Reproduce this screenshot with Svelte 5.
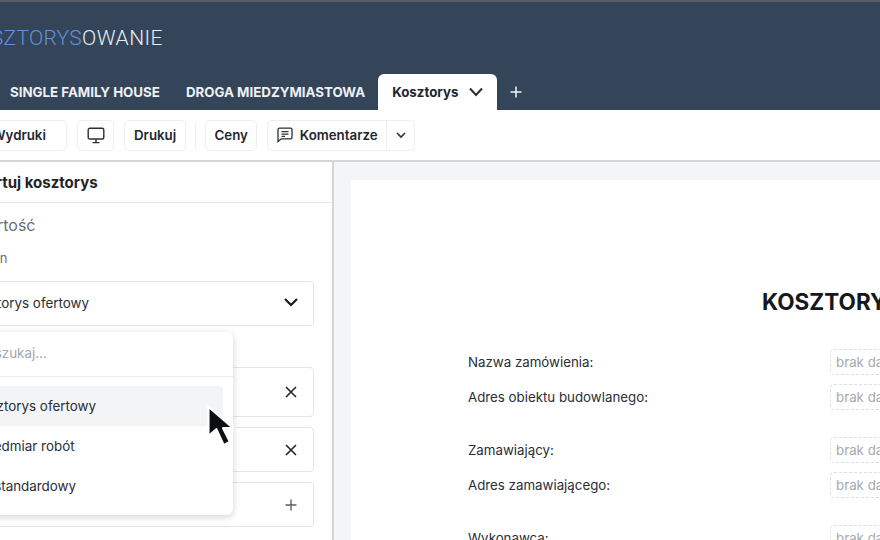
<script>
  const tabs = ['SINGLE FAMILY HOUSE', 'DROGA MIEDZYMIASTOWA'];

  const groups = [
    ['Nazwa zamówienia:', 'Adres obiektu budowlanego:'],
    ['Zamawiający:', 'Adres zamawiającego:'],
    ['Wykonawca:']
  ];

  const options = ['Kosztorys ofertowy', 'Przedmiar robót', 'Niestandardowy'];
</script>

<div class="page">
  <header class="header">
    <div class="logo"><span class="logo-blue">KOSZTORYS</span>OWANIE</div>
    <nav class="tabs">
      {#each tabs as tab}
        <span class="tab">{tab}</span>
      {/each}
      <span class="tab active">
        Kosztorys
        <svg width="16" height="10" viewBox="0 0 16 10" fill="none" stroke="#27303c" stroke-width="2">
          <path d="M2 1.5l6 6.5 6-6.5" />
        </svg>
      </span>
      <svg class="plus" width="12" height="12" viewBox="0 0 12 12" stroke="#f1f4f7" stroke-width="1.5">
        <path d="M6 .5v11M.5 6h11" />
      </svg>
    </nav>
  </header>

  <div class="toolbar">
    <button class="btn wydruki">Wydruki</button>
    <button class="btn icon-btn" aria-label="Podgląd">
      <svg width="18" height="17" viewBox="0 0 18 17" fill="none" stroke="#2b2f36" stroke-width="1.4">
        <rect x="1.2" y="1.2" width="15.6" height="10.8" rx="1.6" />
        <path d="M9 12v3.5M5.5 15.6h7" />
      </svg>
    </button>
    <button class="btn">Drukuj</button>
    <span class="sep"></span>
    <button class="btn ceny">Ceny</button>
    <div class="split">
      <button class="btn komentarze">
        <svg width="16" height="16" viewBox="0 0 16 16" fill="none" stroke="#2b2f36" stroke-width="1.3">
          <path d="M1 14.5V2.6A1.4 1.4 0 0 1 2.4 1.2h11.2A1.4 1.4 0 0 1 15 2.6v7.8a1.4 1.4 0 0 1-1.4 1.4H4.2z" />
          <path d="M4.5 4.6h7M4.5 7.2h7M4.5 9.4h3.6" />
        </svg>
        Komentarze
      </button>
      <button class="btn caret" aria-label="Więcej">
        <svg width="10" height="7" viewBox="0 0 10 7" fill="none" stroke="#2b2f36" stroke-width="1.6">
          <path d="M1 1l4 4 4-4" />
        </svg>
      </button>
    </div>
  </div>

  <div class="body">
    <aside class="sidebar">
      <div class="side-title">Eksportuj kosztorys</div>
      <div class="side-content">
        <div class="value-label">Wartość</div>
        <div class="small-label">Szablon</div>
        <div class="select">
          <span>Kosztorys ofertowy</span>
          <svg width="14" height="9" viewBox="0 0 14 9" fill="none" stroke="#16191e" stroke-width="2.2">
            <path d="M1 1l6 6 6-6" />
          </svg>
        </div>
        <div class="fields">
          <div class="field tall">
            <svg width="12" height="12" viewBox="0 0 12 12" stroke="#22262c" stroke-width="1.6">
              <path d="M1 1l10 10M11 1L1 11" />
            </svg>
          </div>
          <div class="field">
            <svg width="12" height="12" viewBox="0 0 12 12" stroke="#22262c" stroke-width="1.6">
              <path d="M1 1l10 10M11 1L1 11" />
            </svg>
          </div>
          <div class="field">
            <svg width="12" height="12" viewBox="0 0 12 12" stroke="#5b6068" stroke-width="1.4">
              <path d="M6 .5v11M.5 6h11" />
            </svg>
          </div>
        </div>
      </div>

      <div class="dropdown">
        <div class="search">Wyszukaj...</div>
        <ul class="options">
          {#each options as option, i}
            <li class:highlight={i === 0}>{option}</li>
          {/each}
        </ul>
      </div>
    </aside>

    <main class="main">
      <div class="sheet">
        <h1>KOSZTORYS OFERTOWY</h1>
        {#each groups as group}
          <div class="group">
            {#each group as label}
              <div class="row">
                <span class="row-label">{label}</span>
                <span class="empty">brak danych</span>
              </div>
            {/each}
          </div>
        {/each}
      </div>
    </main>
  </div>

  <svg class="cursor" width="34" height="48" viewBox="0 0 30 42">
    <path d="M3 3v26l7-6 6.5 14 5.5-3-6-12h9z" fill="#0d0f12" stroke="#fff" stroke-width="2" stroke-linejoin="round" />
  </svg>
</div>

<style>
  :global(body) {
    margin: 0;
    background: #fff;
  }

  .page {
    position: relative;
    width: 880px;
    height: 540px;
    overflow: hidden;
    font-family: Inter, "Liberation Sans", sans-serif;
    color: #23272e;
  }

  .header {
    height: 108px;
    background: #34455a;
    border-top: 2px solid #5b6068;
    display: flex;
    flex-direction: column;
  }

  .logo {
    margin: 24px 0 0 -37px;
    font-family: Roboto, sans-serif;
    font-weight: 300;
    font-size: 21px;
    line-height: 24px;
    letter-spacing: 0.45px;
    color: #e8edf2;
    white-space: nowrap;
  }

  .logo-blue {
    color: #5f92d8;
    letter-spacing: 0.3px;
  }

  .tabs {
    margin-top: 24px;
    height: 36px;
    padding-left: 10px;
    display: flex;
    align-items: stretch;
  }

  .tab {
    display: flex;
    align-items: center;
    margin-right: 26px;
    font-size: 13.3px;
    font-weight: 700;
    color: #eef1f4;
    white-space: nowrap;
  }

  .tab.active {
    margin: 0 0 0 -13px;
    width: 119px;
    box-sizing: border-box;
    padding-left: 14px;
    gap: 10px;
    background: #fff;
    border-radius: 6px 6px 0 0;
    color: #23272e;
  }

  .plus {
    align-self: center;
    margin-left: 13px;
  }

  .toolbar {
    height: 52px;
    box-sizing: border-box;
    border-bottom: 2px solid #d3d6d9;
    margin-left: -30px;
    padding-top: 10px;
    display: flex;
    align-items: flex-start;
    gap: 10px;
  }

  .btn {
    height: 31px;
    padding: 0 9px 2px;
    display: inline-flex;
    align-items: center;
    justify-content: center;
    background: #fff;
    border: 1px solid #eceef0;
    border-radius: 5px;
    font-family: inherit;
    font-size: 13.3px;
    font-weight: 600;
    color: #23272e;
  }

  .wydruki {
    width: 97px;
    justify-content: flex-start;
    padding-left: 21px;
  }

  .icon-btn {
    width: 37px;
    padding: 0;
  }

  .sep {
    width: 1px;
    height: 26px;
    margin: 3px -1px 0 -1px;
    background: #eceef0;
  }

  .ceny {
    width: 52px;
    padding: 0 0 2px;
  }

  .split {
    display: flex;
  }

  .komentarze {
    width: 120px;
    gap: 7px;
    padding: 0 0 2px;
    border-radius: 5px 0 0 5px;
  }

  .caret {
    width: 28px;
    padding: 0;
    border-left: 0;
    border-radius: 0 5px 5px 0;
  }

  .body {
    display: flex;
    height: 378px;
  }

  .sidebar {
    position: relative;
    width: 334px;
    flex: none;
    box-sizing: border-box;
    border-right: 2px solid #d3d6d9;
  }

  .side-title {
    height: 41px;
    box-sizing: border-box;
    border-bottom: 1px solid #e8eaec;
    margin-left: -49px;
    display: flex;
    align-items: center;
    font-size: 15px;
    font-weight: 700;
    color: #1f2329;
  }

  .side-content {
    margin-left: -40px;
    padding-right: 18px;
  }

  .value-label {
    margin: 12px 0 0 13px;
    font-size: 16px;
    line-height: 20px;
    color: #6a6f76;
  }

  .small-label {
    margin: 14px 0 0 -2px;
    font-size: 13px;
    line-height: 18px;
    color: #6a6f76;
  }

  .select {
    margin-top: 14px;
    height: 45px;
    box-sizing: border-box;
    border: 1px solid #e3e5e8;
    border-radius: 4px;
    display: flex;
    align-items: center;
    justify-content: space-between;
    padding: 0 15px 2px 5px;
    font-size: 13.4px;
    color: #2a2e35;
  }

  .fields {
    margin-top: 41px;
    display: flex;
    flex-direction: column;
    gap: 10px;
  }

  .field {
    height: 45px;
    box-sizing: border-box;
    border: 1px solid #e3e5e8;
    border-radius: 4px;
    display: flex;
    align-items: center;
    justify-content: flex-end;
    padding-right: 16px;
  }

  .field.tall {
    height: 50px;
  }

  .dropdown {
    position: absolute;
    top: 170px;
    left: -40px;
    width: 273px;
    height: 183px;
    background: #fff;
    border-radius: 6px;
    box-shadow: 0 2px 7px rgba(30, 40, 50, 0.2);
    font-size: 13.4px;
    color: #2a2e35;
  }

  .search {
    height: 45px;
    box-sizing: border-box;
    border-bottom: 1px solid #eceef0;
    padding: 0 0 2px 14px;
    display: flex;
    align-items: center;
    color: #a2a6ab;
  }

  .options {
    list-style: none;
    margin: 9px 10px 0 0;
    padding: 0;
  }

  .options li {
    height: 40px;
    box-sizing: border-box;
    display: flex;
    align-items: center;
    padding: 0 0 0 13px;
    border-radius: 3px;
  }

  .options li.highlight {
    background: #f3f4f5;
  }

  .main {
    flex: 1;
    min-width: 0;
    overflow: hidden;
    background: #f3f5f6;
    padding: 18px 0 0 17px;
  }

  .sheet {
    width: 1040px;
    height: 400px;
    background: #fff;
    padding: 109px 0 0 117px;
    box-sizing: border-box;
  }

  h1 {
    margin: 0 0 34px 294px;
    font-size: 22.5px;
    line-height: 26px;
    font-weight: 700;
    color: #15181c;
    white-space: nowrap;
  }

  .group {
    margin-bottom: 27px;
    display: flex;
    flex-direction: column;
    gap: 9px;
  }

  .row {
    display: flex;
    align-items: center;
    height: 26px;
    font-size: 13.3px;
  }

  .row-label {
    width: 362px;
    flex: none;
    color: #2a2e35;
  }

  .empty {
    width: 120px;
    height: 26px;
    box-sizing: border-box;
    border: 1px dashed #dcdfe2;
    border-radius: 4px;
    padding-left: 5px;
    display: flex;
    align-items: center;
    color: #a6aaaf;
    white-space: nowrap;
  }

  .cursor {
    position: absolute;
    left: 205px;
    top: 403px;
  }
</style>
